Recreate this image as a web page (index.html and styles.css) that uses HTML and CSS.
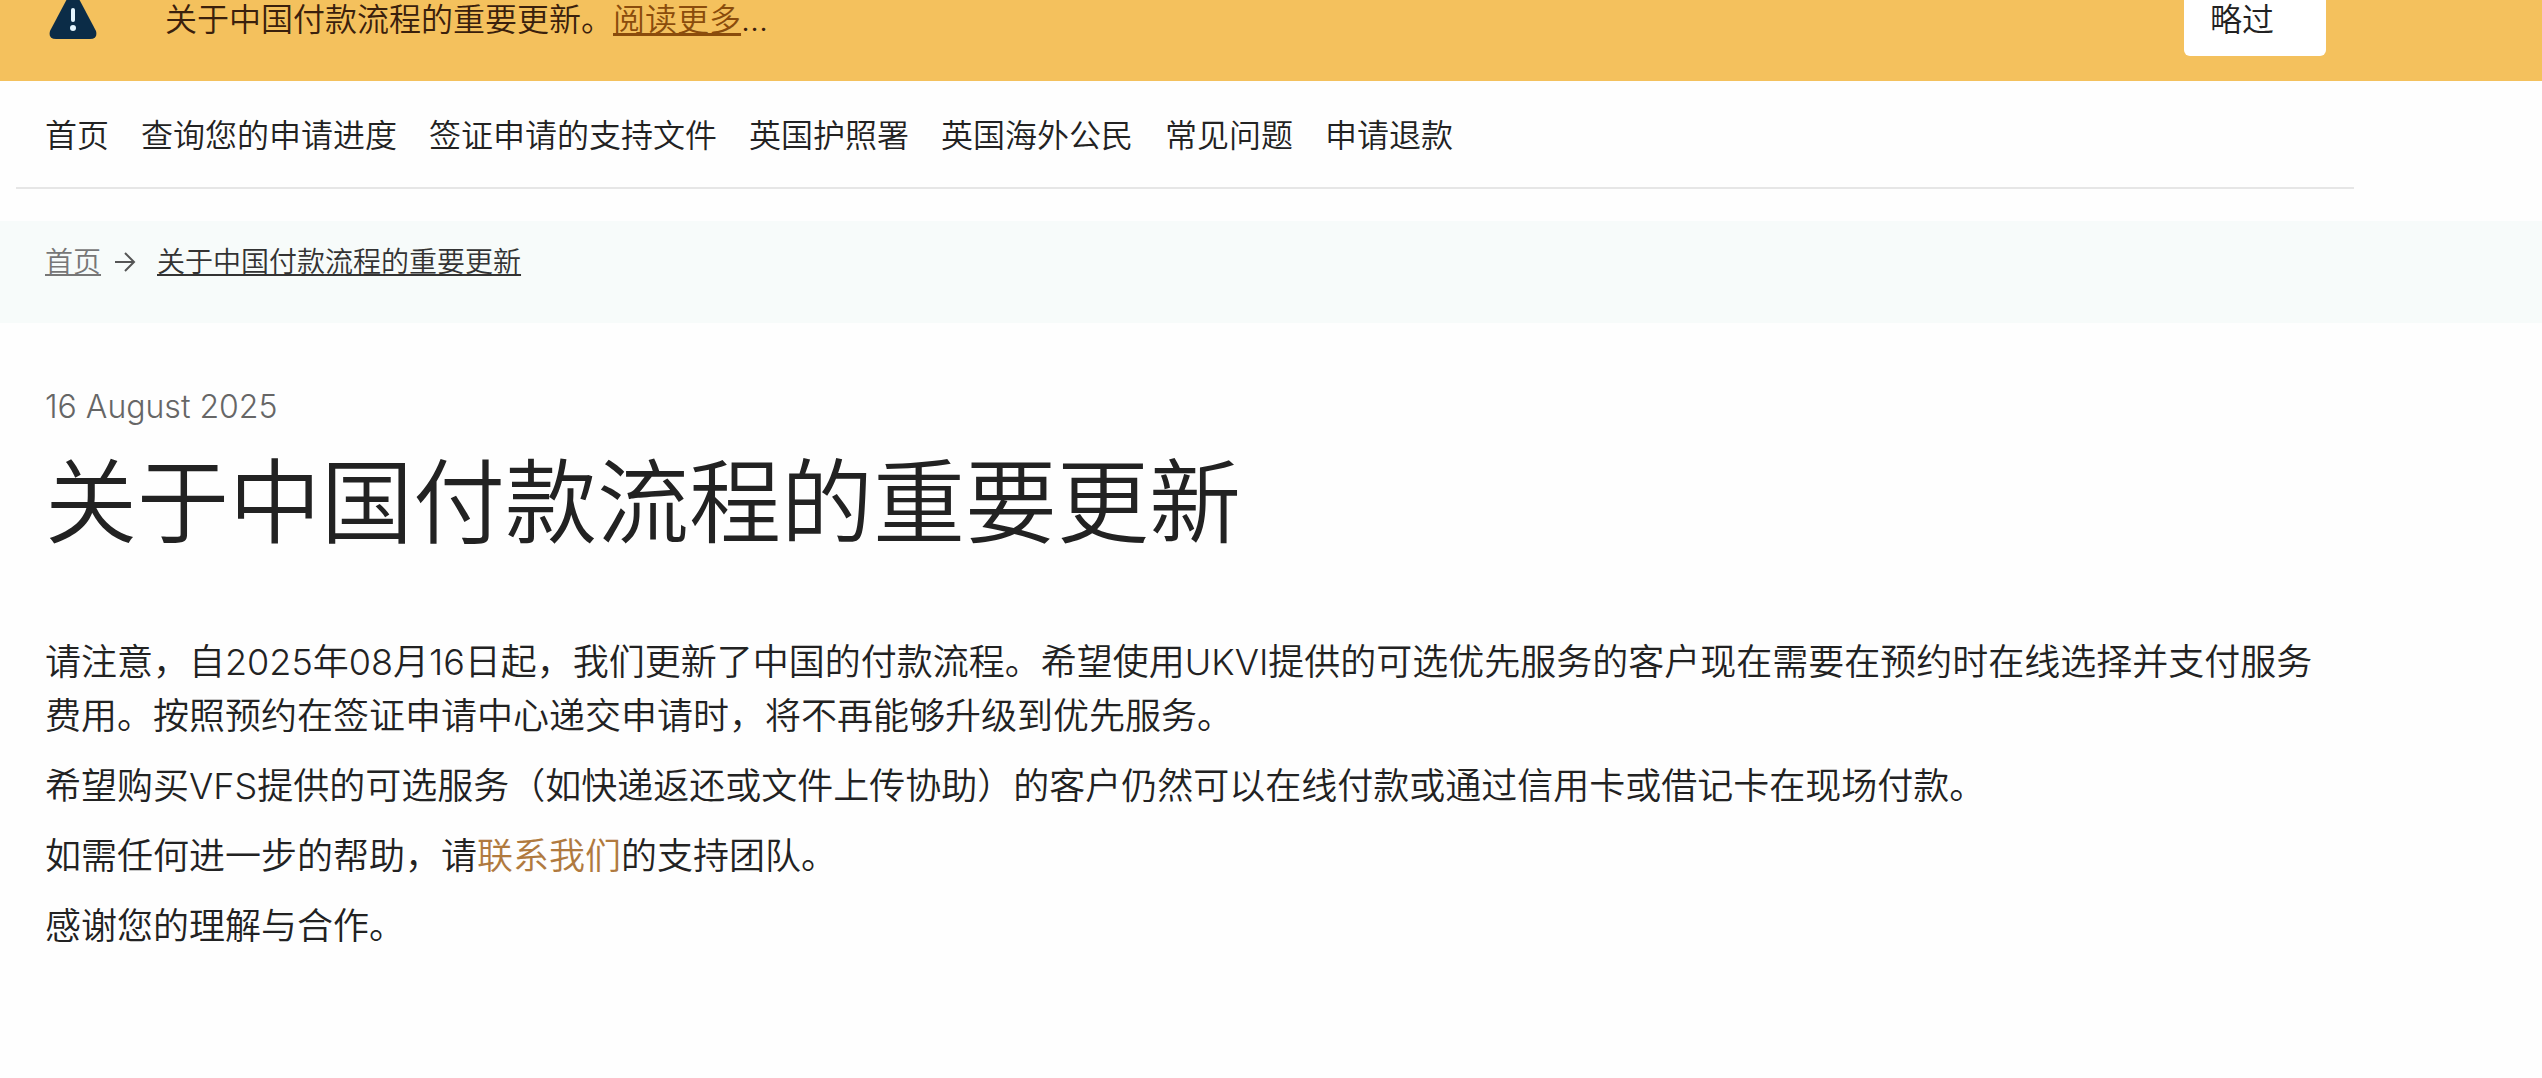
FILE: index.html
```html
<!DOCTYPE html>
<html lang="zh-CN">
<head>
  <meta charset="UTF-8">
  <meta name="viewport" content="width=device-width, initial-scale=1.0">
  <title>关于中国付款流程的重要更新</title>
  <link rel="stylesheet" href="styles.css">
</head>
<body>
  <div class="notice">
    <div class="container notice-inner">
      <svg class="notice-icon" viewBox="0 0 48 40" aria-hidden="true">
        <path d="M19 -3Q24 -9 29 -3L47 31Q49 39 41 39H7Q-1 39 1 31Z" fill="#0b2c47"/>
        <path d="M24 10V20" stroke="#e4f6ff" stroke-width="4" stroke-linecap="round"/>
        <circle cx="24" cy="28" r="3" fill="#e4f6ff"/>
      </svg>
      <p class="notice-text">关于中国付款流程的重要更新。<a href="#article">阅读更多</a>...</p>
      <button class="skip-button" type="button">略过</button>
    </div>
  </div>

  <nav class="container main-nav" aria-label="主导航">
    <a href="#">首页</a>
    <a href="#">查询您的申请进度</a>
    <a href="#">签证申请的支持文件</a>
    <a href="#">英国护照署</a>
    <a href="#">英国海外公民</a>
    <a href="#">常见问题</a>
    <a href="#">申请退款</a>
  </nav>

  <div class="breadcrumb">
    <nav class="container breadcrumb-inner" aria-label="面包屑">
      <a class="breadcrumb-home" href="#">首页</a>
      <svg class="breadcrumb-arrow" viewBox="0 0 24 24" aria-hidden="true">
        <path d="M2 12H21M12 3L21 12L12 21" fill="none" stroke="#555" stroke-width="2"/>
      </svg>
      <a href="#article">关于中国付款流程的重要更新</a>
    </nav>
  </div>

  <main class="container article" id="article">
    <time class="date" datetime="2025-08-16">16 August 2025</time>
    <h1>关于中国付款流程的重要更新</h1>
    <p>请注意，自2025年08月16日起，我们更新了中国的付款流程。希望使用UKVI提供的可选优先服务的客户现在需要在预约时在线选择并支付服务费用。按照预约在签证申请中心递交申请时，将不再能够升级到优先服务。</p>
    <p>希望购买VFS提供的可选服务（如快递返还或文件上传协助）的客户仍然可以在线付款或通过信用卡或借记卡在现场付款。</p>
    <p>如需任何进一步的帮助，请<a href="#">联系我们</a>的支持团队。</p>
    <p>感谢您的理解与合作。</p>
  </main>
</body>
</html>
```

FILE: styles.css
```css
* {
  box-sizing: border-box;
}

body {
  margin: 0;
  background-color: #fefefe;
  color: #222;
  font-family: Inter, "Noto Sans CJK SC", sans-serif;
  font-size: 32px;
  font-weight: 350;
}

a {
  color: inherit;
}

.container {
  max-width: 2338px;
  margin-left: 16px;
  padding: 0 28px 0 29px;
}

/* Notice bar */
.notice {
  background-color: #f4c15d;
}

.notice-inner {
  display: flex;
  align-items: flex-start;
  height: 81px;
}

.notice-icon {
  width: 48px;
  height: 40px;
  margin-left: 4px;
  margin-right: 68px;
}

.notice-text {
  flex: 1;
  margin: 0;
  line-height: 40px;
  color: #3a200c;
}

.notice-text a {
  color: #8a4c0c;
}

.skip-button {
  width: 142px;
  height: 56px;
  padding: 0 26px 16px;
  border: none;
  border-radius: 0 0 6px 6px;
  background-color: #fff;
  color: #222;
  font: inherit;
  line-height: 40px;
  text-align: left;
  cursor: pointer;
}

/* Main navigation */
.main-nav {
  display: flex;
  flex-wrap: wrap;
  gap: 32px;
  padding-top: 32px;
  padding-bottom: 28px;
  border-bottom: 2px solid #e6e6e6;
  line-height: 46px;
}

.main-nav a {
  text-decoration: none;
}

/* Breadcrumb */
.breadcrumb {
  margin-top: 32px;
  padding: 20px 0 40px;
  background-color: #f7fbfa;
  color: #333;
  font-size: 28px;
  line-height: 42px;
}

.breadcrumb-inner {
  display: flex;
  align-items: center;
}

.breadcrumb-home {
  color: #777;
}

.breadcrumb-arrow {
  width: 24px;
  height: 24px;
  margin: 0 20px 0 12px;
}

/* Article */
.article {
  padding-top: 60px;
  font-size: 36px;
  line-height: 54px;
}

.date {
  display: block;
  color: #666;
  font-size: 32px;
  line-height: 48px;
}

h1 {
  margin: 16px 0 76px;
  font-size: 92px;
  font-weight: 350;
  line-height: 112px;
}

.article p {
  margin: 0 0 16px;
}

.article p a {
  color: #b07a3f;
  text-decoration: none;
}
```
